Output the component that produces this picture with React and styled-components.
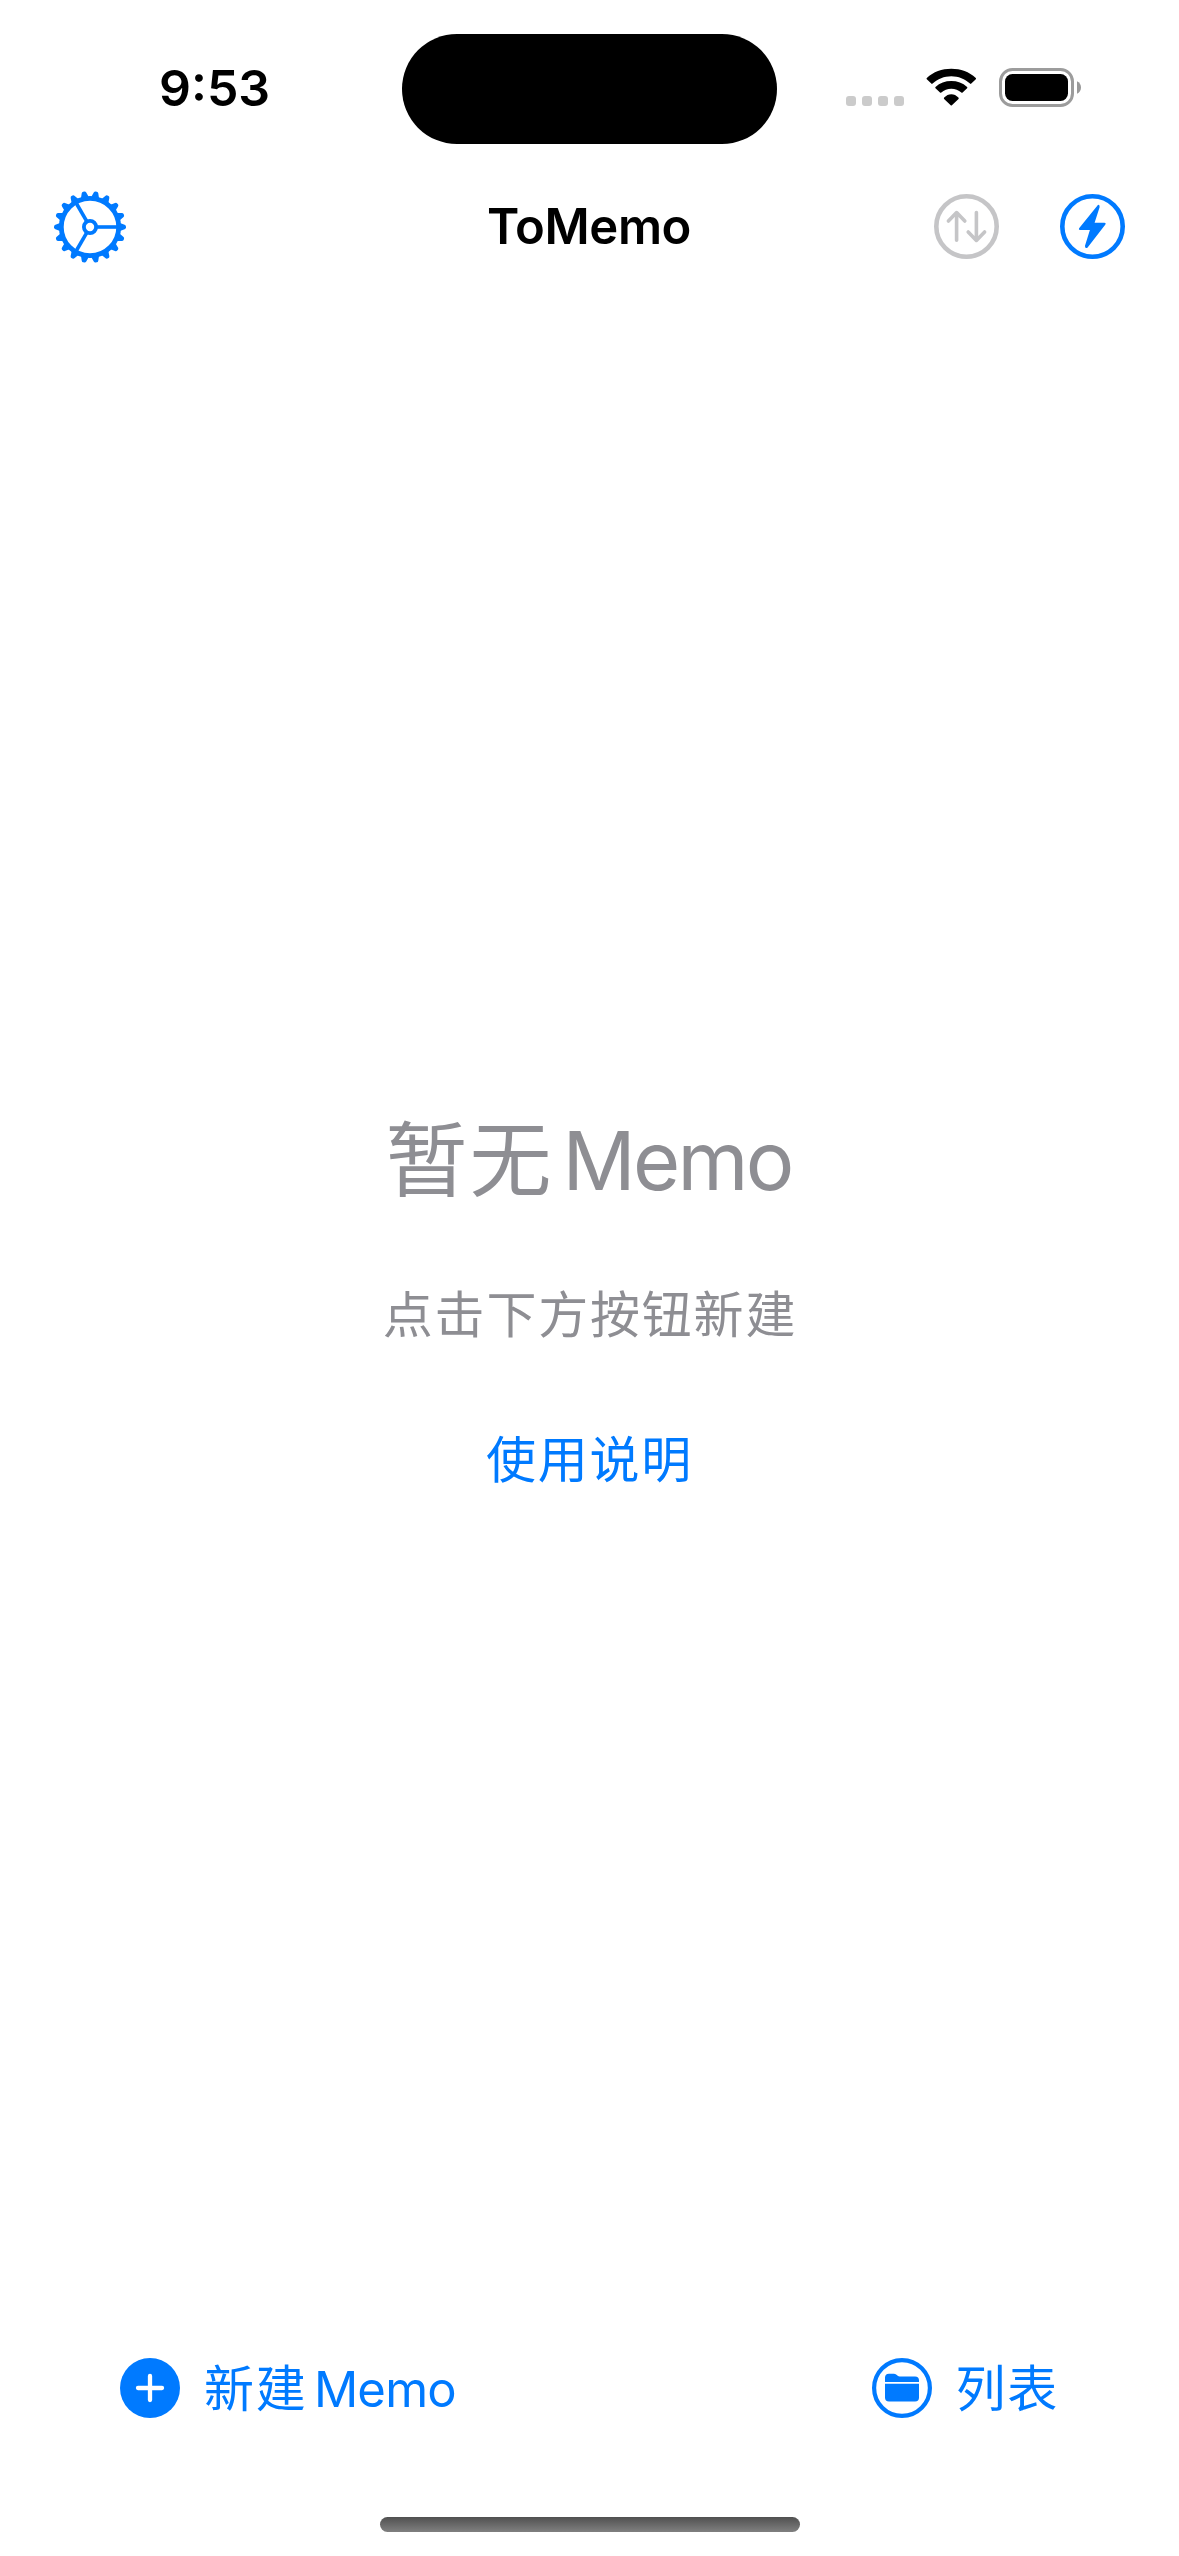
import React from "react";
import styled, { createGlobalStyle } from "styled-components";

const BLUE = "#007aff";
const GRAY = "#8e8e93";

const GlobalStyle = createGlobalStyle`
  html, body { margin: 0; padding: 0; background: #fff; }
  * { box-sizing: border-box; }
`;

const Screen = styled.div`
  width: 1179px;
  height: 2556px;
  display: flex;
  flex-direction: column;
  overflow: hidden;
  background: #fff;
  font-family: "Inter", "Noto Sans CJK SC", sans-serif;
`;

const StatusBar = styled.header`
  height: 161px;
  flex: none;
  display: grid;
  grid-template-columns: 402px 375px 402px;
  align-items: start;
`;

const Time = styled.div`
  padding: 58px 0 0 159px;
  font-size: 50px;
  line-height: 60px;
  font-weight: 600;
  color: #000;
`;

const Island = styled.div`
  height: 110px;
  margin-top: 34px;
  border-radius: 55px;
  background: #000;
`;

const StatusIcons = styled.div`
  display: flex;
  align-items: flex-start;
  padding: 68px 0 0 69px;
`;

const Signal = styled.div`
  display: flex;
  gap: 6px;
  margin-top: 28px;
`;

const SignalDot = styled.i`
  width: 10px;
  height: 10px;
  border-radius: 3px;
  background: #cbcbcb;
`;

const Icon = styled.svg`
  display: block;
  flex: none;
  overflow: visible;
  margin-left: ${(p) => p.$ml || 0}px;
`;

const NavBar = styled.nav`
  height: 132px;
  flex: none;
  display: grid;
  grid-template-columns: 1fr auto 1fr;
  align-items: center;
  padding: 0 54px 0 53px;
`;

const NavTitle = styled.h1`
  margin: 0;
  font-size: 49px;
  line-height: 60px;
  font-weight: 600;
  letter-spacing: -0.4px;
  color: #000;
`;

const NavActions = styled.div`
  display: flex;
  justify-content: flex-end;
  gap: 61px;
  margin-bottom: 1px;
`;

const PlainButton = styled.button`
  display: flex;
  align-items: center;
  padding: 0;
  border: 0;
  background: none;
  font: inherit;
  color: ${BLUE};
`;

const Empty = styled.main`
  flex: 1;
  display: flex;
  flex-direction: column;
  align-items: center;
  padding-top: 813px;
  color: ${GRAY};
`;

const EmptyTitle = styled.h2`
  margin: 0;
  padding-right: 2px;
  font-size: 82px;
  line-height: 110px;
  font-weight: 400;
  letter-spacing: 2px;
`;

const EmptyHint = styled.p`
  margin: 69px 0 0;
  padding-left: 1px;
  font-size: 50px;
  line-height: 60px;
  letter-spacing: 1.8px;
`;

const HelpLink = styled.a`
  margin-top: 85px;
  font-size: 50px;
  line-height: 60px;
  letter-spacing: 1.7px;
  color: ${BLUE};
`;

const Latin = styled.span`
  font-size: ${(p) => p.$size}px;
  letter-spacing: ${(p) => p.$track || 0}px;
  margin-left: ${(p) => p.$gap}px;
`;

const Toolbar = styled.footer`
  height: 90px;
  flex: none;
  display: flex;
  justify-content: space-between;
  align-items: center;
  padding: 0 120px;
`;

const ToolLabel = styled.span`
  margin-left: 24px;
  padding-top: 2px;
  font-size: 50px;
  line-height: 60px;
  letter-spacing: 1.7px;
`;

const HomeArea = styled.div`
  height: 123px;
  flex: none;
  display: flex;
  justify-content: center;
  align-items: flex-end;
  padding-bottom: 24px;
`;

const HomeBar = styled.div`
  width: 420px;
  height: 15px;
  border-radius: 8px;
  background: linear-gradient(#505050, #808080);
`;

const TEETH = Array.from({ length: 18 }, (_, i) => i * 20);

function GearIcon() {
  return (
    <Icon width="74" height="74" viewBox="-37 -37 74 74" fill="none" stroke={BLUE}>
      <circle r="28.7" strokeWidth="4.8" />
      <circle r="6.1" strokeWidth="3.8" />
      {[0, 120, 240].map((a) => (
        <path key={a} d="M7 0H28" strokeWidth="3.6" transform={`rotate(${a})`} />
      ))}
      {TEETH.map((a) => (
        <path
          key={a}
          d="M30-3.9L34.6-2.3Q36-1.8 36-.6V.6Q36 1.8 34.6 2.3L30 3.9Z"
          fill={BLUE}
          stroke="none"
          transform={`rotate(${a})`}
        />
      ))}
    </Icon>
  );
}

function SortIcon() {
  return (
    <Icon width="65" height="65" viewBox="0 0 65 65" fill="none" stroke="#c5c5c7" strokeLinecap="round" strokeLinejoin="round">
      <circle cx="32.5" cy="32.5" r="30.2" strokeWidth="4.6" />
      <path d="M22.6 46.3V19M14.4 27L22.6 18.6L30.8 27M42.4 18.6V46M34.2 38L42.4 46.4L50.6 38" strokeWidth="3.6" />
    </Icon>
  );
}

function BoltIcon() {
  return (
    <Icon width="65" height="65" viewBox="0 0 65 65">
      <circle cx="32.5" cy="32.5" r="30.2" fill="none" stroke={BLUE} strokeWidth="4.6" />
      <path
        d="M37.3 11.7L19.3 34.1Q18.2 36 20.1 36H29.9L25 51.8Q24.7 54 26.3 54.1Q27.2 54 27.8 53.2L45.2 30.8Q46.4 28.9 44.4 28.7H34.6L39.6 13.2Q39.9 11.2 38.6 10.8Q37.8 10.9 37.3 11.7Z"
        fill={BLUE}
      />
    </Icon>
  );
}

function WifiIcon() {
  return (
    <Icon $ml={22} width="51" height="38" viewBox="0 0 51 38">
      <path d="M25.3 8.2C32.4 8.2 39 10.9 44 15.6Q44.7 16.2 45.3 15.6L49.8 11.3Q50.4 10.6 49.8 9.9C43.2 3.9 34.7 .8 25.3 .8S7.4 3.9 .8 9.9Q.2 10.6 .8 11.3L5.3 15.6Q5.9 16.2 6.6 15.6C11.6 10.9 18.2 8.2 25.3 8.2Z" />
      <path d="M25.3 20.7C29.1 20.7 32.6 22.1 35.3 24.5Q36 25.1 36.6 24.5L41.1 20.2Q41.7 19.5 41.1 18.9C36.8 15 31.3 13 25.3 13S13.8 15 9.5 18.9Q8.9 19.5 9.5 20.2L14 24.5Q14.6 25.1 15.3 24.5C18 22.1 21.5 20.7 25.3 20.7Z" />
      <path d="M32.5 31Q33.1 30.3 32.4 29.6Q29.3 26.2 25.3 26.2T18.2 29.6Q17.5 30.3 18.1 31L24.7 37.2Q25.3 37.8 25.9 37.2Z" />
    </Icon>
  );
}

function BatteryIcon() {
  return (
    <Icon $ml={22} width="82" height="39" viewBox="0 0 82 39">
      <rect x="1.5" y="1.5" width="72" height="36" rx="12" fill="none" stroke="#9c9c9c" strokeWidth="3" />
      <rect x="6" y="6" width="63" height="27" rx="7.5" />
      <path d="M78 13.2C80.5 14.2 82 16.6 82 19.5S80.5 24.8 78 25.8Z" fill="#999" />
    </Icon>
  );
}

function PlusIcon() {
  return (
    <Icon width="60" height="60" viewBox="0 0 60 60">
      <circle cx="30" cy="30" r="30" fill={BLUE} />
      <path d="M30 18V42M18 30H42" stroke="#fff" strokeWidth="4.3" strokeLinecap="round" />
    </Icon>
  );
}

function FolderIcon() {
  return (
    <Icon width="60" height="60" viewBox="0 0 60 60">
      <circle cx="30" cy="30" r="27.9" fill="none" stroke={BLUE} strokeWidth="4.2" />
      <path d="M13 24V19.6Q13 15.7 17 15.7H21.7Q23.3 15.7 24.5 16.7L25.7 17.7Q26.5 18.4 27.7 18.4H43Q47 18.4 47 22.4V24Z" fill={BLUE} />
      <path d="M13 25.8H47V39.6Q47 43.6 43 43.6H17Q13 43.6 13 39.6Z" fill={BLUE} />
    </Icon>
  );
}

export default function App() {
  return (
    <Screen>
      <GlobalStyle />
      <StatusBar>
        <Time>9:53</Time>
        <Island />
        <StatusIcons>
          <Signal>
            {[0, 1, 2, 3].map((n) => (
              <SignalDot key={n} />
            ))}
          </Signal>
          <WifiIcon />
          <BatteryIcon />
        </StatusIcons>
      </StatusBar>
      <NavBar>
        <PlainButton>
          <GearIcon />
        </PlainButton>
        <NavTitle>ToMemo</NavTitle>
        <NavActions>
          <PlainButton>
            <SortIcon />
          </PlainButton>
          <PlainButton>
            <BoltIcon />
          </PlainButton>
        </NavActions>
      </NavBar>
      <Empty>
        <EmptyTitle>
          暂无<Latin $size={81} $gap={9} $track={-2.7}>Memo</Latin>
        </EmptyTitle>
        <EmptyHint>点击下方按钮新建</EmptyHint>
        <HelpLink>使用说明</HelpLink>
      </Empty>
      <Toolbar>
        <PlainButton>
          <PlusIcon />
          <ToolLabel>
            新建<Latin $size={49} $gap={6.5} $track={-0.8}>Memo</Latin>
          </ToolLabel>
        </PlainButton>
        <PlainButton>
          <FolderIcon />
          <ToolLabel>列表</ToolLabel>
        </PlainButton>
      </Toolbar>
      <HomeArea>
        <HomeBar />
      </HomeArea>
    </Screen>
  );
}
